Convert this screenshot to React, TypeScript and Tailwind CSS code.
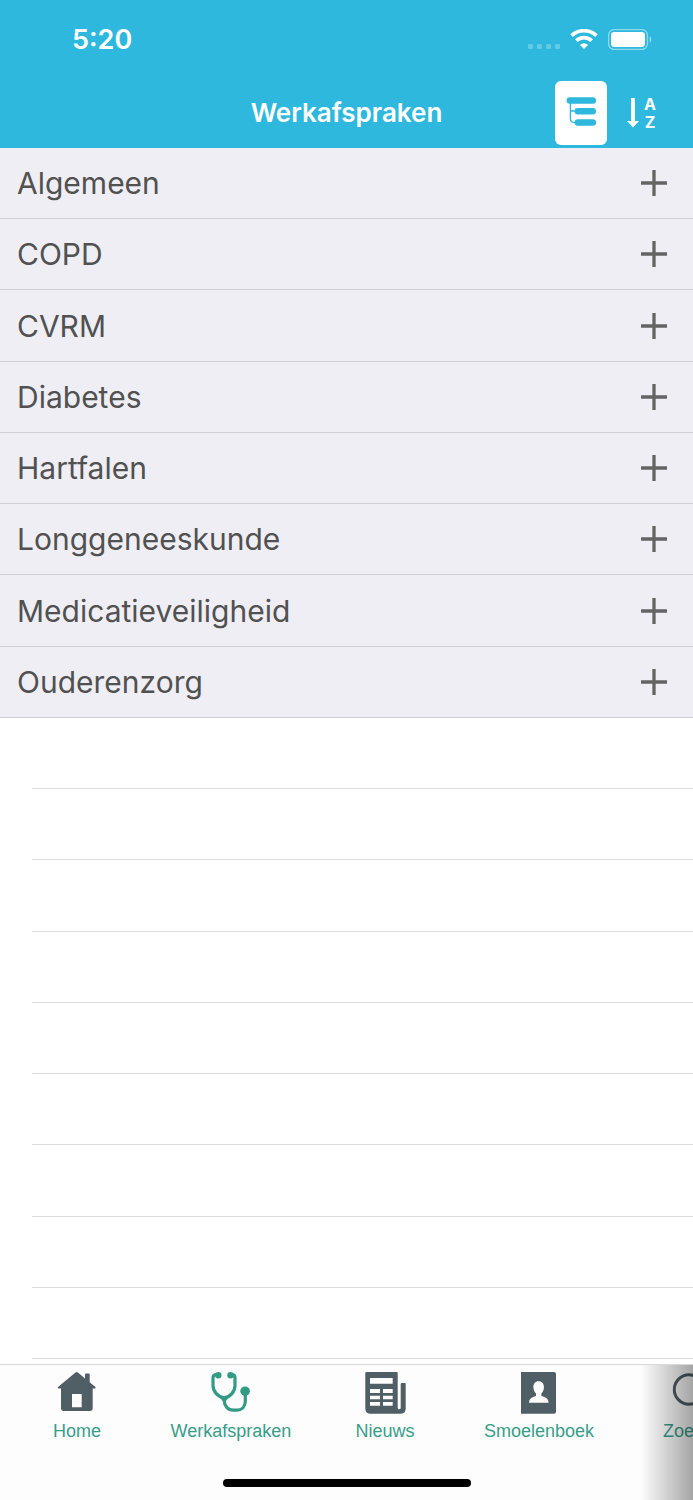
import { useState, type ReactNode } from 'react';

const categories = [
  'Algemeen',
  'COPD',
  'CVRM',
  'Diabetes',
  'Hartfalen',
  'Longgeneeskunde',
  'Medicatieveiligheid',
  'Ouderenzorg',
];

const emptyRows = Array.from({ length: 9 }, (_, i) => i);

function SignalDots() {
  return (
    <span className="flex h-[21px] items-end gap-1 pb-px" aria-hidden="true">
      <span className="size-[5px] rounded-[1px] bg-white/25" />
      <span className="size-[5px] rounded-[1px] bg-white/25" />
      <span className="size-[5px] rounded-[1px] bg-white/25" />
      <span className="size-[5px] rounded-[1px] bg-white/25" />
    </span>
  );
}

function WifiIcon() {
  return (
    <svg width="28" height="21" viewBox="0 0 28 21" fill="none" aria-hidden="true">
      <path d="M1.600 6.600a18.200 18.200 0 0 1 24.800 0" stroke="#fff" strokeWidth="3.800" />
      <path d="M6.300 11.700a11.200 11.200 0 0 1 15.400 0" stroke="#fff" strokeWidth="3.700" />
      <path d="M14 20l-4.100-4.100a6 6 0 0 1 8.200 0z" fill="#fff" />
    </svg>
  );
}

function BatteryIcon() {
  return (
    <svg width="44" height="21" viewBox="0 0 44 21" fill="none" aria-hidden="true">
      <rect x="0.6" y="0.6" width="38.8" height="19.8" rx="5.6" stroke="#fff" strokeOpacity=".45" strokeWidth="1.3" />
      <rect x="3" y="3" width="34" height="15" rx="3.4" fill="#fff" />
      <path d="M41.6 7.3c2.2 1 2.2 5.4 0 6.4z" fill="#fff" fillOpacity=".5" />
    </svg>
  );
}

function TreeIcon() {
  return (
    <svg width="52" height="64" viewBox="0 0 52 64" fill="#2eb8de" aria-hidden="true">
      <rect x="11.6" y="16.2" width="29.4" height="6.6" rx="3.3" />
      <rect x="19.6" y="27" width="21.4" height="6.4" rx="3.2" />
      <rect x="19.6" y="38.2" width="21.4" height="6.6" rx="3.3" />
      <path d="M15.4 21v16.5q0 4 4 4H21M15.4 30H21" fill="none" stroke="#2eb8de" strokeWidth="1.3" />
    </svg>
  );
}

function ArrowDown() {
  return (
    <svg width="12" height="30" viewBox="0 0 12 30" fill="#fff" aria-hidden="true">
      <path d="M4.1 0h3.8v23H12l-6 6.4L0 23h4.1z" />
    </svg>
  );
}

function PlusIcon() {
  return (
    <svg width="26" height="26" viewBox="0 0 26 26" aria-hidden="true">
      <path d="M13 0v26M0 13h26" stroke="#646464" strokeWidth="3.3" />
    </svg>
  );
}

function HomeIcon() {
  return (
    <svg width="44" height="44" viewBox="0 0 44 44" fill="#505f66" aria-hidden="true">
      <path
        fillRule="evenodd"
        d="M20.5 2.5q1.2-1 2.4 0L30 8.4V4.6q0-1 1-1h2.7q1 0 1 1v7.7l5.7 4.6q.8 1.2-.5 1.7h-2.2v20q0 2.3-2.3 2.3H8.3Q6 40.900 6 38.600v-20H3.500q-1.400-.500-.500-1.700zM17 24v13.300h9.700V24z"
      />
    </svg>
  );
}

function StethoscopeIcon() {
  return (
    <svg width="44" height="44" viewBox="0 0 44 44" fill="none" stroke="#329b85" strokeWidth="3.2" aria-hidden="true">
      <path d="M9 4.500H7.500Q4 4.500 4 8v7.500c0 6 5 11.500 11.200 12.400C21.300 27 26 21.500 26 15.500V8q0-3.500-3.500-3.500H21" />
      <path d="M15.300 29v1.500c0 5.500 3.500 9.700 9 9.700h3.200c5.300 0 8.800-3.700 8.800-9V22" />
      <path d="M10.500 27h9.600l-4 5h-1.700z" fill="#329b85" stroke="none" />
      <circle cx="9.300" cy="5.200" r="3.200" fill="#329b85" stroke="none" />
      <circle cx="21.500" cy="5.200" r="3.200" fill="#329b85" stroke="none" />
      <circle cx="36.100" cy="21.200" r="4.800" fill="#329b85" stroke="none" />
    </svg>
  );
}

function NewsIcon() {
  return (
    <svg width="44" height="44" viewBox="0 0 44 44" fill="#505f66" aria-hidden="true">
      <path
        fillRule="evenodd"
        d="M3.300 2h30.400q1 0 1 1v35q0 1.200 1.500 1.200t1.500-1.200V14q0-1 1-1h3q1 0 1 1v24.200q0 5.500-5.500 5.500H7.800q-5.500 0-5.500-5.500V3q0-1 1-1zM7 8v5.700h22.700V8zM7 19v4h10v-4zM20 19v4h9.700v-4zM7 25.700v3.600h10v-3.600zM20 25.700v3.600h9.700v-3.600zM7 32v3.700h10V32zM20 32v3.700h9.700V32z"
      />
    </svg>
  );
}

function ContactsIcon() {
  return (
    <svg width="44" height="44" viewBox="0 0 44 44" aria-hidden="true">
      <path d="M4 2h33q2 0 2 2v37.700q0 2-2 2H4z" fill="#505f66" />
      <path
        d="M21.600 11.300c-3.300 0-5.200 2.300-5.200 5.700 0 2.900 1 5.100 2.600 6.500v2.300c-1.200 1.400-6.800 1.200-7 6.900h19.600c-.200-5.700-5.900-5.500-7.200-6.900v-2.300c1.600-1.400 2.500-3.600 2.500-6.500 0-3.400-2-5.700-5.300-5.700z"
        fill="#fff"
      />
    </svg>
  );
}

function SearchIcon() {
  return (
    <svg width="44" height="44" viewBox="0 0 44 44" fill="none" stroke="#505f66" aria-hidden="true">
      <circle cx="18" cy="19.500" r="14.700" strokeWidth="3" />
      <path d="M28.500 30l11.500 11.500" strokeWidth="4" strokeLinecap="round" />
    </svg>
  );
}

const tabs: { label: string; icon: ReactNode }[] = [
  { label: 'Home', icon: <HomeIcon /> },
  { label: 'Werkafspraken', icon: <StethoscopeIcon /> },
  { label: 'Nieuws', icon: <NewsIcon /> },
  { label: 'Smoelenboek', icon: <ContactsIcon /> },
  { label: 'Zoeken', icon: <SearchIcon /> },
];

export default function App() {
  const [active, setActive] = useState('Werkafspraken');

  return (
    <div className="flex min-h-screen flex-col overflow-hidden bg-white font-['Inter',sans-serif]">
      <header className="bg-[#2eb8de] text-white">
        <div className="flex h-[77px] items-center justify-between pt-0.5 pr-[41px] pl-[72px]">
          <time className="text-[27px] leading-8 font-semibold">5:20</time>
          <div className="flex items-center gap-2.5">
            <SignalDots />
            <WifiIcon />
            <BatteryIcon />
          </div>
        </div>
        <div className="grid h-[71px] grid-cols-[1fr_auto_1fr] items-center">
          <h1 className="col-start-2 text-[26px] leading-8 font-semibold">Werkafspraken</h1>
          <div className="flex items-center justify-end gap-5 pr-[37px]">
            <button type="button" aria-label="Groeperen" className="rounded-md bg-white">
              <TreeIcon />
            </button>
            <button type="button" aria-label="Sorteren" className="flex items-center gap-[5px]">
              <ArrowDown />
              <span className="flex w-3 flex-col items-center text-base leading-[18px] font-bold">
                <span>A</span>
                <span>Z</span>
              </span>
            </button>
          </div>
        </div>
      </header>

      <main className="grid flex-1 auto-rows-fr pb-[5px]">
        {categories.map((name) => (
          <button
            key={name}
            type="button"
            aria-expanded="false"
            className="flex min-h-16 items-center justify-between border-b border-[#cfced3] bg-[#efeef4] pr-[26px] pl-[17px] text-left text-[30px] leading-10 text-[#515151]"
          >
            <span>{name}</span>
            <PlusIcon />
          </button>
        ))}
        {emptyRows.map((row) => (
          <div key={row} className="ml-8 min-h-16 border-b border-[#dcdcde]" />
        ))}
      </main>

      <footer className="relative border-t border-[#d8d8d8] bg-[#fdfdfd]">
        <nav className="flex overflow-hidden pt-[5px] font-['Liberation_Sans',sans-serif]">
          {tabs.map(({ label, icon }) => (
            <button
              key={label}
              type="button"
              onClick={() => setActive(label)}
              aria-current={active === label ? 'page' : undefined}
              className="flex w-2/9 shrink-0 flex-col items-center gap-[5px] text-lg leading-6 text-[#379e89]"
            >
              {icon}
              <span>{label}</span>
            </button>
          ))}
        </nav>
        <div className="flex justify-center pt-9 pb-[13px]">
          <span className="h-2 w-[248px] rounded-full bg-black" />
        </div>
        <div className="pointer-events-none absolute inset-y-0 right-0 w-[52px] bg-linear-to-r from-black/0 to-black/35" />
      </footer>
    </div>
  );
}
